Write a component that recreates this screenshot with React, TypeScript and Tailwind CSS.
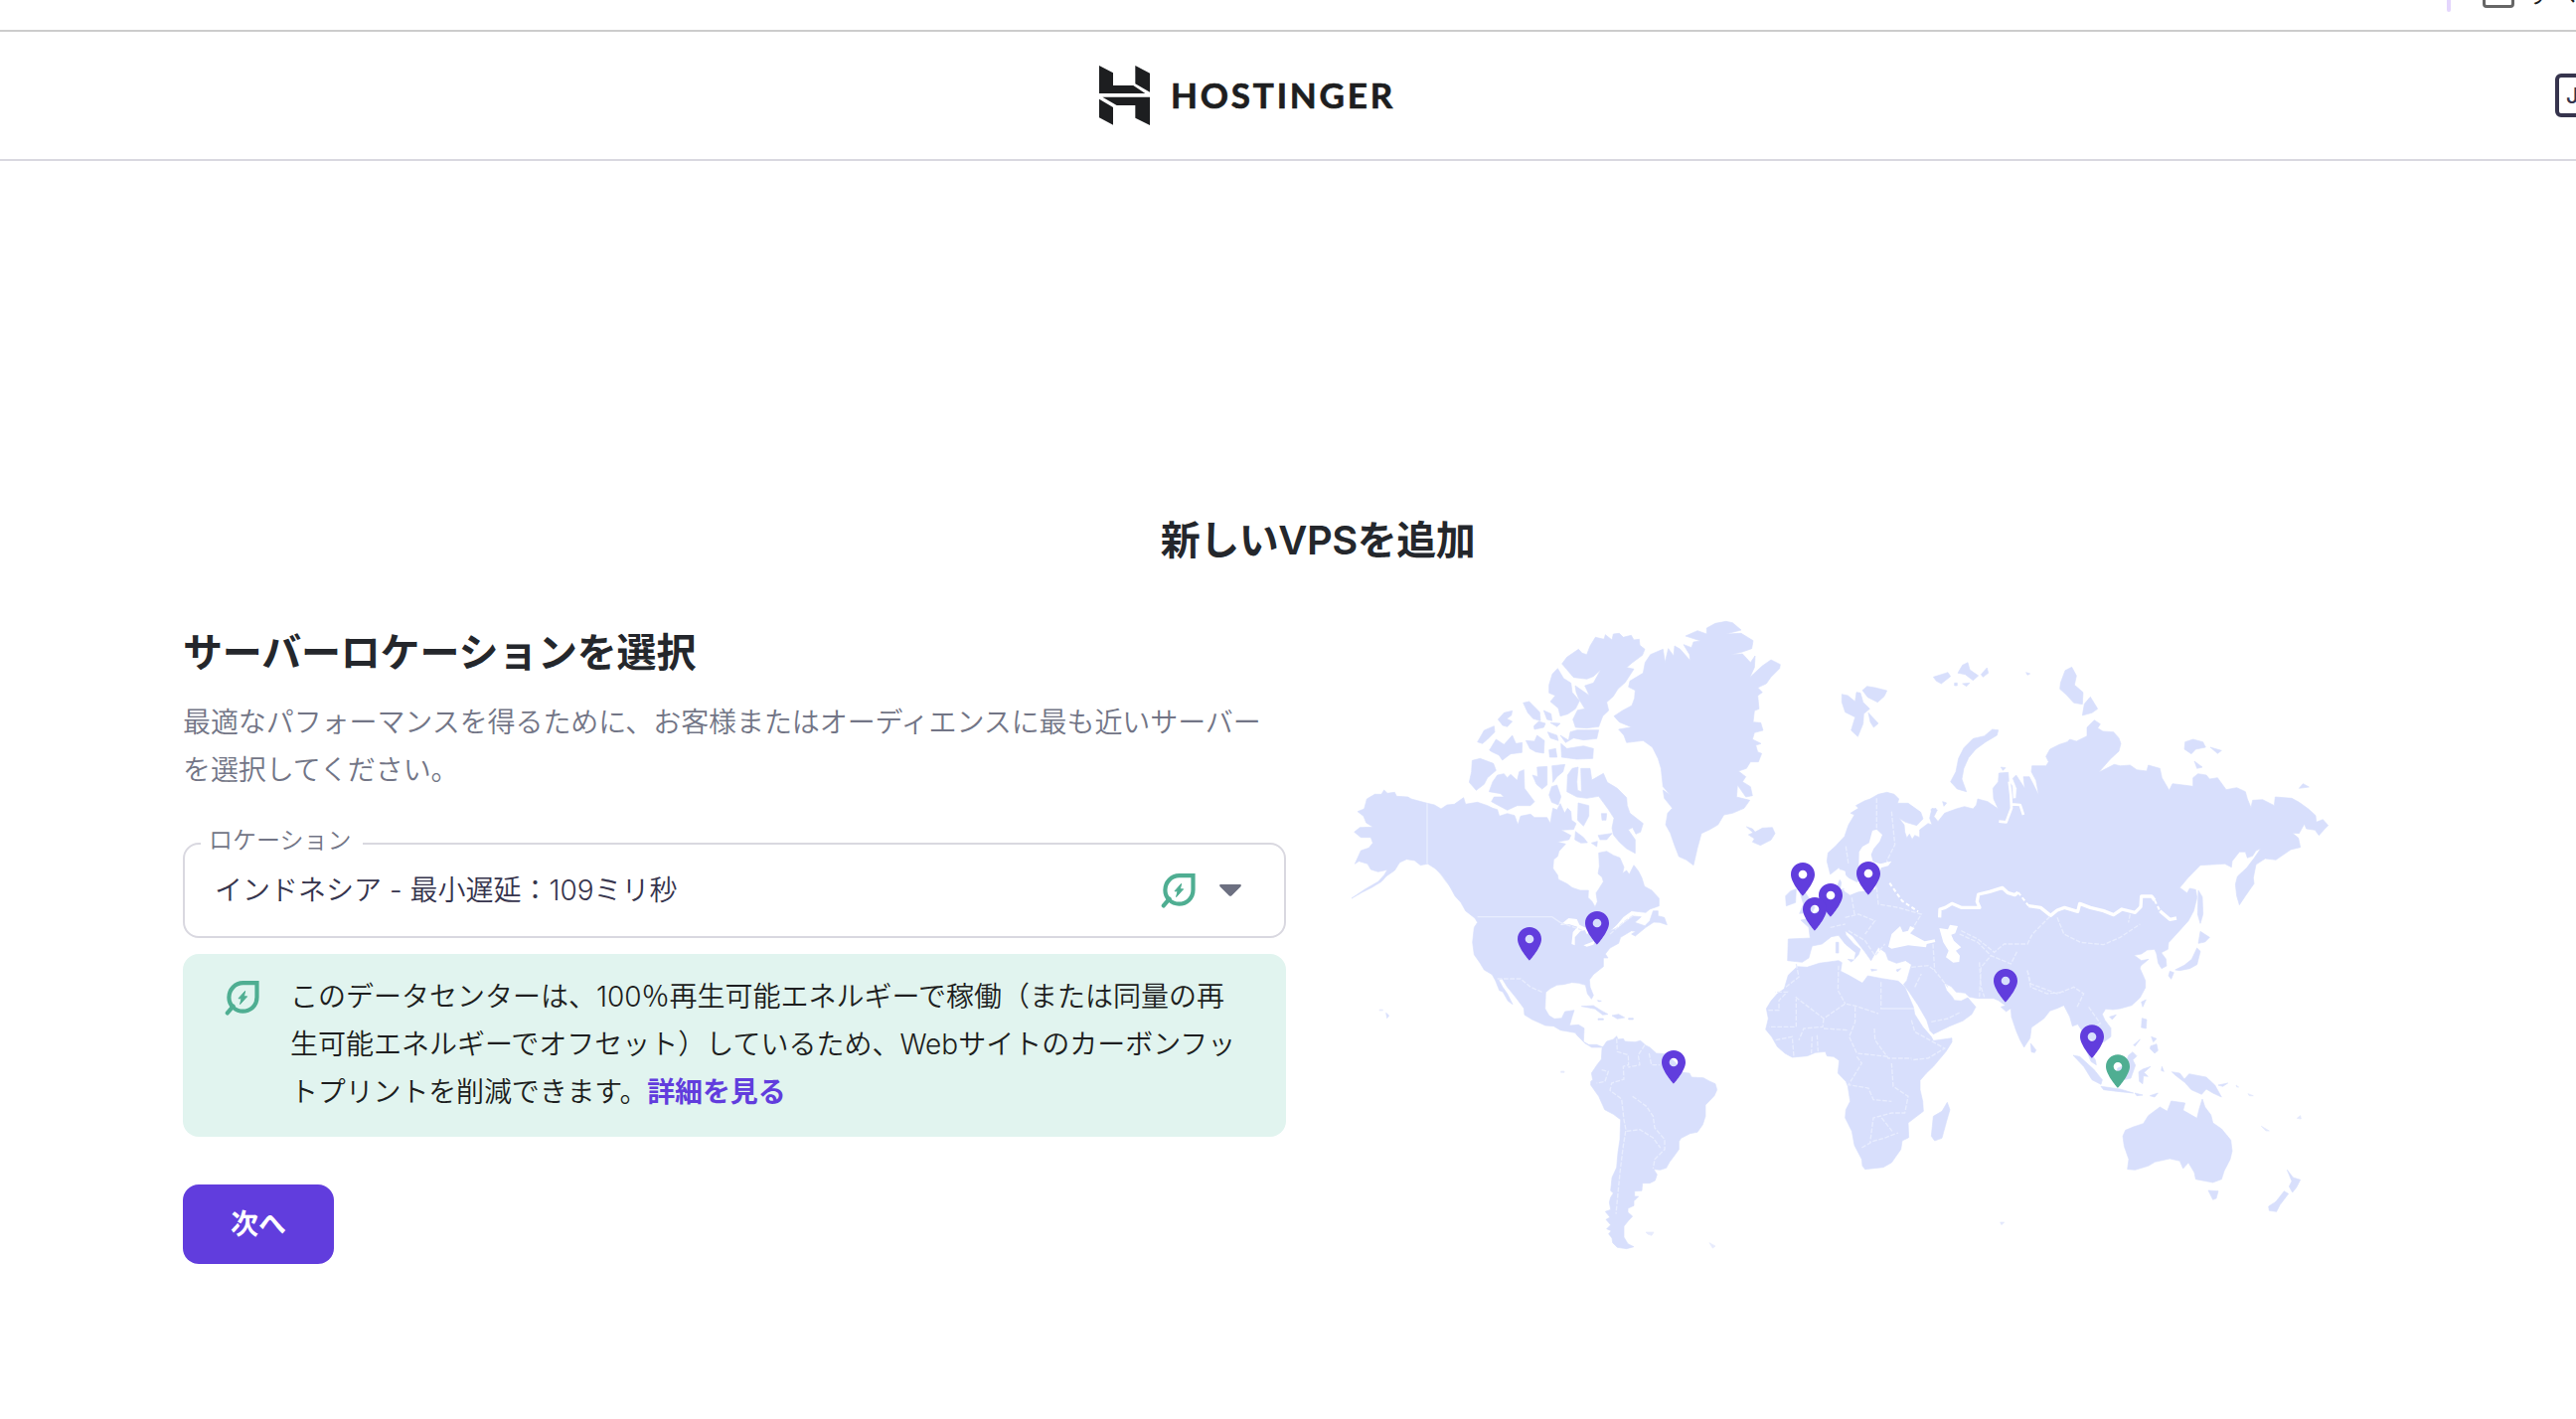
import React from "react";

const LAND = "#d8dffc";
const SEA = "#ffffff";

function Logo() {
  return (
    <svg className="h-[60px] w-[51px]" viewBox="78 78 153 180" fill="#1d1e20">
      <path d="M78 78L120 100V138H181L217 162H78Z" />
      <path d="M187 78L231 101V158L187 133Z" />
      <path d="M88 173H231V258L187 236V198H131Z" />
      <path d="M78 179L120 204V257L78 235Z" />
    </svg>
  );
}

function LeafIcon() {
  return (
    <svg className="h-[36px] w-[36px] shrink-0" viewBox="0 0 36 36" fill="none">
      <path
        d="M32.5 3.2V17.5C32.5 25.8 26.2 31.6 18.3 31.6C10.5 31.6 4.4 25.6 4.4 17.8C4.4 9.9 10.6 3.2 18.5 3.2Z"
        stroke="#4fae92"
        strokeWidth="4.2"
      />
      <path d="M8.6 26.6L2.8 33.4" stroke="#4fae92" strokeWidth="4.2" strokeLinecap="round" />
      <path d="M20.6 11.4L14 18.8H17L15.6 24.6L22.6 16.8H19.4Z" fill="#4fae92" stroke="#4fae92" strokeLinejoin="round" />
    </svg>
  );
}

type PinProps = { x: number; y: number; color?: string };

/** Marker whose tip touches (x, y). */
function Pin({ x, y, color = "#613ddd" }: PinProps) {
  return (
    <path
      transform={`translate(${x - 36} ${y - 101})`}
      fill={color}
      fillRule="evenodd"
      d="M36 0C16 0 0 16 0 36C0 62 36 101 36 101S72 62 72 36C72 16 56 0 36 0ZM36 49a13 13 0 1 1 0-26a13 13 0 0 1 0 26Z"
    />
  );
}

const pins: PinProps[] = [
  { x: 597, y: 1100 },
  { x: 801, y: 1052 },
  { x: 1422, y: 905 },
  { x: 1506, y: 968 },
  { x: 1458, y: 1010 },
  { x: 1620, y: 902 },
  { x: 1032, y: 1472 },
  { x: 2034, y: 1226 },
  { x: 2295, y: 1395 },
  { x: 2373, y: 1485, color: "#4fae92" },
];

function NorthAmerica() {
  return (
    <g>
      {/* mainland */}
      <path d="M78 650L98 642L106 612L130 598L150 598L158 585L168 595L190 592L196 604L230 606L240 612L288 625L310 630L330 642L348 630L370 628L398 608L404 628L440 622L470 632L486 640L500 644L506 664L530 656L552 662L562 690L570 664L600 658L612 668L650 668L660 686L664 660L668 640L680 645L690 626L703 655L712 640L722 650L724 676L738 686L730 704L692 706L722 722L716 735L680 742L706 748L686 770L682 785L670 795L668 822L682 842L684 855L710 868L726 880L750 888L775 888L774 910L786 922L795 938L802 922L798 896L806 884L820 862L816 848L804 838L808 815L806 775L830 770L850 782L870 790L882 818L878 836L890 828L898 840L912 812L926 830L936 850L944 876L966 888L988 912L988 935L960 945L948 955L905 950L880 968L860 992L840 1010L866 1000L890 980L910 966L934 968L915 985L945 995L960 980L970 950L985 950L985 965L1004 970L1012 992L990 985L972 984L948 1000L916 1026L905 1020L918 1012L905 1010L872 1030L866 1048L840 1062L826 1080L834 1092L820 1092L820 1118L790 1142L778 1158L780 1180L790 1205L784 1216L772 1200L766 1174L745 1168L725 1166L700 1172L680 1174L660 1184L646 1196L644 1245L656 1266L672 1276L694 1274L704 1254L732 1250L726 1268L718 1296L745 1294L762 1304L760 1345L776 1354L800 1354L820 1362L806 1362L785 1362L765 1350L740 1325L735 1318L690 1310L670 1298L645 1296L605 1278L582 1264L580 1244L556 1212L530 1180L514 1154L504 1158L516 1180L530 1200L546 1232L532 1222L516 1194L506 1190L494 1160L484 1142L460 1128L448 1108L430 1082L425 1045L430 1000L440 985L432 972L404 950L390 925L372 905L352 868L330 838L312 822L290 808L268 812L250 798L226 794L205 804L190 828L165 845L150 862L120 880L92 894L60 912L100 885L140 862L158 842L168 826L140 832L118 825L108 808L82 800L70 808L88 768L112 760L124 745L118 728L88 728L68 712L85 698L125 697L104 684L96 664Z" />
      {/* alaska panhandle islands */}
      <path d="M320 828L350 850L378 890L366 888L345 862Z" opacity=".6" />
      {/* Banks and Victoria */}
      <path d="M424 496L448 490L488 505L496 526L470 548L460 568L436 586L415 562L422 530Z" />
      <path d="M475 590L486 560L500 540L520 536L530 548L540 538L560 556L566 530L580 524L582 580L612 620L600 632L560 632L530 646L500 630L482 620L490 606L520 606L510 596Z" />
      <path d="M440 440L460 405L490 392L492 410L470 432L455 445Z" />
      <path d="M476 465L496 432L520 448L545 420L556 445L575 442L574 472L540 476L515 495L505 480L484 470Z" />
      <path d="M502 372L520 352L545 346L542 360L528 370L545 378L530 394L516 390Z" />
      <path d="M578 322L596 318L628 350L630 376L608 370L592 352Z" />
      <path d="M586 436L612 438L620 420L642 436L640 474L616 470L598 460Z" />
      <path d="M640 345L662 355L665 376L650 372Z M610 392L625 378L645 384L640 396L612 402Z M660 382L690 384L680 394Z M652 410L680 420L684 436L660 428Z M656 464L676 460L680 486L658 486Z" />
      <path d="M606 540L622 545L620 516L650 514L650 570L635 582L618 568Z" />
      <path d="M665 512L704 508L698 530L680 545L668 562Z M664 575L680 570L692 605L684 630L664 622L656 600Z" />
      {/* Devon */}
      <path d="M690 420L715 435L720 410L740 404L806 404L800 430L760 434L730 428L706 442Z M692 445L710 460L760 452L790 460L788 490L740 492L694 486Z" />
      {/* Axel Heiberg */}
      <path d="M656 268L666 235L682 218L700 248L722 262L726 290L748 316L736 340L712 356L690 362L684 338L660 318L675 300L656 292Z" />
      {/* Ellesmere */}
      <path d="M695 204L710 184L745 160L756 172L770 176L780 150L796 124L822 130L826 116L846 132L850 114L868 112L880 124L904 118L912 132L928 130L930 148L945 160L938 178L908 200L890 215L912 220L886 260L864 280L850 302L830 320L836 345L818 362L806 394L770 398L736 396L728 372L742 344L764 340L746 310L738 290L735 270L778 300L764 270L790 262L812 222L790 242L770 250L730 245Z" />
      {/* Baffin */}
      <path d="M710 590L712 540L726 520L744 516L740 560L742 586L754 590L752 520L780 520L785 555L820 535L832 562L862 580L890 608L892 632L900 655L940 686L932 712L918 718L908 698L895 705L916 735L916 776L890 762L868 742L850 720L846 700L852 670L834 642L806 604L770 610L740 606Z" />
      {/* Southampton and nearby */}
      <path d="M744 624L776 632L776 664L760 694L742 676Z M736 710L760 728L772 744L752 745L734 735Z M814 656L830 656L828 676L816 676Z M804 722L846 716L830 735L810 735Z M784 745L802 740L800 756Z" />
      {/* Greenland */}
      <path d="M852 362L878 345L906 330L914 308L916 284L896 274L900 256L940 232L946 200L962 176L1000 160L1006 200L1016 158L1032 180L1035 150L1052 160L1082 194L1080 176L1062 146L1086 155L1092 138L1114 135L1068 120L1104 104L1132 114L1132 96L1158 82L1190 76L1210 80L1236 102L1190 114L1236 112L1272 134L1268 158L1240 168L1205 176L1240 174L1264 200L1278 180L1276 215L1262 245L1300 210L1326 192L1354 206L1352 218L1325 245L1312 264L1286 276L1300 290L1286 300L1290 340L1276 346L1272 380L1295 382L1302 405L1276 412L1270 432L1296 445L1280 450L1286 470L1298 475L1288 500L1264 500L1252 520L1228 528L1250 545L1240 560L1264 575L1270 602L1250 606L1225 570L1222 606L1262 616L1245 640L1210 655L1184 660L1166 690L1140 705L1116 716L1104 760L1092 812L1070 796L1048 786L1034 750L1022 715L1008 690L1014 655L1028 640L1004 610L1000 585L1022 600L1000 575L994 520L985 490L968 456L940 436L890 442L882 420L866 402L905 395L868 380Z" />
      {/* Iceland */}
      <path d="M1252 696L1270 702L1278 712L1300 700L1330 698L1338 716L1326 736L1294 752L1270 742L1276 732L1258 720L1272 714Z" />
      {/* Caribbean and Hawaii */}
      <path d="M754 1238L790 1236L812 1250L834 1262L818 1264L795 1246Z M846 1266L866 1262L884 1272L862 1276Z M804 1275h16v4h-16Z M896 1274h14v4h-14Z M802 1220l12 2l-8 2Z M164 1258l9 8l-6 8Z" />
      <path opacity=".6" d="M144 1248h10v3h-10Z M692 1434h10v4h-10Z" />
    </g>
  );
}

function SouthAmerica() {
  return (
    <g transform="translate(0 1140)">
      <path d="M816 225L830 204L850 198L860 188L864 198L880 196L885 204L915 206L932 202L948 216L960 222L980 240L1010 242L1040 270L1060 298L1080 300L1086 312L1122 314L1140 324L1158 332L1163 350L1155 368L1142 382L1128 396L1128 430L1120 455L1104 478L1082 482L1055 496L1048 506L1048 530L1035 548L1020 568L1010 586L992 592L972 590L982 606L976 624L960 632L938 632L936 655L914 656L914 672L926 672L912 686L912 700L894 708L894 720L908 732L896 745L882 762L882 795L894 815L912 824L890 830L862 826L848 812L846 798L836 785L844 776L830 770L842 758L828 742L840 735L826 718L842 712L838 690L842 675L850 662L842 655L846 615L860 585L864 540L870 500L872 440L850 424L824 410L806 370L782 336L782 325L788 320L784 300L800 276L814 258Z" />
      <path d="M948 780L972 780L966 790L954 786Z M1140 812L1158 822L1150 828Z" opacity=".6" />
    </g>
  );
}

function Eurasia() {
  return (
    <g transform="translate(1500 0)">
      <path d="M-5 800L-2 775L20 755L48 725L60 690L78 660L66 655L90 640L82 632L108 618L125 612L150 598L176 592L198 598L212 612L208 625L240 625L278 652L285 672L266 692L232 682L212 670L228 690L230 712L236 730L244 718L252 734L260 722L275 728L275 705L300 686L312 690L305 670L312 640L328 645L318 665L330 680L350 655L385 642L410 635L436 642L446 630L450 612L480 620L512 642L498 612L496 580L512 560L514 534L542 532L544 560L554 572L556 612L566 610L568 580L556 550L566 540L592 580L588 545L606 545L634 600L626 556L612 530L614 512L656 512L664 500L656 484L668 462L696 448L720 440L728 432L748 438L780 422L780 396L802 374L820 386L812 398L828 408L860 410L876 428L882 445L876 468L850 492L815 532L862 508L880 512L910 510L930 524L960 528L965 510L1000 520L1006 548L1028 586L1038 566L1070 570L1100 574L1100 548L1115 536L1140 540L1150 552L1174 548L1200 584L1232 578L1258 590L1264 612L1275 638L1280 616L1310 614L1345 632L1348 606L1398 610L1420 622L1448 642L1470 662L1472 682L1492 674L1508 692L1496 704L1480 722L1468 706L1442 702L1436 688L1420 716L1400 715L1418 730L1424 758L1395 765L1350 796L1318 792L1290 810L1282 850L1284 868L1272 885L1258 905L1240 932L1232 905L1228 870L1234 846L1262 820L1285 790L1304 762L1290 768L1280 784L1264 790L1258 772L1240 772L1218 800L1216 818L1196 808L1122 812L1085 850L1060 880L1082 896L1090 882L1108 886L1112 910L1102 950L1086 980L1050 1020L1026 1046L1024 1066L1004 1076L1018 1095L1020 1116L1005 1124L995 1108L990 1080L984 1066L962 1068L944 1080L922 1084L944 1100L966 1096L942 1116L940 1124L956 1160L956 1182L940 1212L915 1235L880 1245L858 1248L836 1246L826 1262L834 1280L852 1304L852 1330L832 1345L810 1350L790 1336L786 1370L805 1400L808 1415L792 1405L778 1370L765 1312L752 1292L736 1298L728 1270L710 1235L690 1244L668 1252L650 1275L612 1302L608 1334L590 1362L578 1340L566 1312L552 1270L550 1244L536 1254L520 1240L534 1236L512 1220L498 1214L450 1214L425 1210L412 1198L385 1195L370 1178L348 1168L356 1190L372 1208L380 1220L400 1222L420 1212L444 1240L432 1262L405 1282L365 1298L316 1322L306 1312L296 1280L270 1235L244 1196L226 1172L236 1160L250 1112L232 1100L205 1108L180 1098L172 1076L150 1060L128 1100L108 1072L72 1026L50 1010L52 1022L76 1050L96 1066L90 1082L78 1096L82 1076L50 1050L30 1024L8 1028L-20 1050L-50 1056L-60 1092L-80 1105L-124 1100L-122 1035L-56 1032L-60 1000L-84 978L-50 970L-40 955L0 940L30 925L24 880L34 855L50 895L110 890L120 880L60 850L30 820L5 840Z" />
      {/* Novaya Zemlya */}
      <path d="M494 402L512 404L508 420L474 440L444 462L422 488L408 520L402 552L416 590L388 582L368 560L384 530L392 490L408 458L436 430L470 422Z" />
      {/* Svalbard */}
      <path d="M40 296L58 300L80 318L84 290L96 292L104 320L124 340L106 355L104 385L88 424L68 405L80 365L50 350L40 320Z M102 284L116 272L140 276L176 285L168 302L148 320L118 305Z M120 352L150 384L136 396L126 380Z" />
      {/* Franz Josef Land */}
      <path d="M316 244L360 230L368 242L340 264L325 256Z M390 232L404 208L420 200L426 222L452 240L436 254L412 236Z M460 236L478 216L482 232L466 244Z M404 264L426 262L416 272Z M380 262h8v8h-8Z M596 230l12 4l-8 4Z" />
      {/* Severnaya Zemlya */}
      <path d="M700 262L714 224L734 214L748 240L742 268L768 290L766 326L740 322L718 298L698 280Z M766 360L772 325L790 304L812 340L795 352Z" />
      {/* New Siberian Islands and Wrangel */}
      <path d="M1076 440L1100 432L1130 440L1138 456L1108 462L1095 476L1074 462Z M1152 456L1186 466L1174 475Z M1104 498L1128 516L1112 520Z M1420 580L1432 566L1450 576Z" />
      <path d="M308 645L324 640L320 655Z M344 620L356 624L348 634Z M520 516L534 518L526 526Z" />
      {/* Sakhalin, Japan */}
      <path d="M1116 888L1128 908L1130 960L1122 988L1114 960Z M1122 1012L1150 1030L1136 1044L1116 1048Z M1112 1062L1122 1072L1112 1112L1090 1124L1060 1130L1046 1128L1074 1114L1096 1096Z M1030 1132L1042 1136L1034 1156L1026 1146Z" />
      {/* British Isles */}
      <path d="M-115 890L-98 884L-100 925L-128 935L-130 905Z M-88 890L-70 895L-42 940L-50 955L-88 958L-76 930Z" />
      {/* Mediterranean islands */}
      <path d="M22 1045h8v32h-8Z M58 1096L76 1098L68 1104Z M128 1126L146 1128L130 1132Z M204 1128L218 1124L208 1134Z" />
      {/* Sri Lanka, Hainan, Taiwan */}
      <path d="M610 1350L626 1370L622 1378L612 1376Z M848 1270L868 1264L856 1278Z M944 1225L958 1218L948 1240Z" />
    </g>
  );
}

function Africa() {
  return (
    <g transform="translate(1260 540)">
      <path d="M145 578L175 580L212 568L270 560L280 566L276 592L300 604L342 628L358 606L400 614L450 622L470 640L496 700L500 722L524 760L550 790L556 802L612 794L612 806L594 835L556 880L535 900L516 922L516 950L524 985L526 1015L480 1050L482 1094L462 1104L458 1130L430 1170L405 1184L350 1190L342 1180L340 1160L318 1118L310 1075L290 1035L292 1010L305 985L298 940L292 925L268 900L272 862L255 850L235 848L230 835L200 838L175 848L130 852L108 840L85 820L68 790L50 768L58 735L52 705L66 682L85 660L106 645L118 604Z" />
      <path d="M598 988L606 1010L596 1045L582 1096L560 1104L550 1090L556 1030L582 1015Z" />
    </g>
  );
}

function Oceania() {
  return (
    <g transform="translate(1500 900)">
      <path d="M888 730L896 712L920 702L950 692L965 668L1000 642L1022 655L1034 624L1076 630L1070 652L1112 676L1118 650L1128 618L1136 642L1154 666L1160 690L1186 708L1214 742L1218 775L1212 800L1194 835L1186 860L1160 870L1108 860L1104 840L1086 810L1070 828L1060 805L1030 798L985 808L965 820L925 832L902 830L906 800L892 760Z" />
      <path d="M1146 894L1176 896L1170 918L1160 922Z" />
      <path d="M1384 832L1402 855L1424 862L1412 885L1400 900L1390 882L1398 866Z M1375 896L1388 904L1362 938L1352 958L1330 955L1328 942L1350 928Z" />
      {/* Sumatra, Java, Borneo */}
      <path d="M738 486L758 490L800 528L826 560L822 574L795 560L770 520Z M822 580L880 588L920 600L880 596L830 590Z M905 486L918 476L930 488L918 500L926 516L912 555L890 560L870 550L872 525L895 515Z" />
      <path d="M936 536L948 528L972 520L952 538L964 550L950 548L948 572L938 565Z M1006 520L1012 535L1004 532Z M970 608L994 600L984 612Z M924 600L948 606L930 608Z" />
      {/* New Guinea */}
      <path d="M1036 536L1060 540L1074 558L1088 542L1140 552L1166 576L1186 612L1160 600L1140 588L1126 604L1095 590L1075 568L1045 545Z M1176 576L1205 570L1190 580Z" />
      {/* Philippines */}
      <path d="M946 374L960 378L958 405L944 402Z M972 458L990 452L994 472L984 480L970 466Z M974 430L990 436L980 446Z M920 455L940 438L925 458Z" />
      <path d="M1306 700L1330 714L1320 714Z M1414 676L1424 668L1426 678Z M1266 602L1282 608L1270 608Z M1230 576l8 6h-6Z M518 990L530 990L522 998Z" opacity=".7" />
    </g>
  );
}

function InlandWater() {
  return (
    <g fill={SEA}>
      {/* Great Lakes */}
      <path d="M690 992L715 972L740 975L748 992L764 1000L790 1010L770 1020L764 1008L750 1012L734 1030L734 1054L724 1050L728 1014L742 998L716 990Z M760 1054L795 1040L790 1052L770 1058Z" />
      <g transform="translate(1260 540)">
        {/* Baltic */}
        <path d="M372 168L385 164L402 180L394 200L376 222L368 240L374 262L396 268L430 260L420 274L398 280L394 300L380 345L330 352L304 362L282 345L302 348L330 320L332 232L342 216L362 205Z" />
        <path d="M244 300L268 296L278 286L290 290L296 340L276 345L280 318L262 312L250 330Z" />
        {/* Black Sea */}
        <path d="M420 518L430 480L456 456L464 474L480 470L486 456L500 462L486 478L530 502L560 496L562 504L536 510L534 520L480 514L430 524Z" />
        {/* Caspian */}
        <path d="M574 462L600 466L606 452L630 456L622 478L610 482L618 500L640 520L624 530L636 545L634 564L616 566L594 550L602 530L586 505Z" />
      </g>
      <g transform="translate(1500 0)" fill="none" stroke={SEA} strokeLinejoin="round">
        <path strokeWidth="8" d="M545 560L550 600L552 640L536 682L514 680M552 628L578 630L588 660" />
        <path
          strokeWidth="10"
          d="M335 970L336 945L352 940L372 928L400 940L456 940L448 922L452 900L486 892L524 880L540 895L562 902L572 894M604 935L640 940L670 964L690 948L712 940L752 952L758 928L790 940L830 950L860 962L885 945L925 955L942 938L944 906L975 906L984 918M1000 950L1030 976L1050 972"
        />
        <path strokeWidth="6" d="M572 894L604 935M984 918L1000 950M150 815L186 802M184 866L222 920L270 952" strokeDasharray="12 8" />
      </g>
    </g>
  );
}

function Borders() {
  return (
    <g fill="none" stroke="#e8edfe" strokeWidth="4">
      <path d="M288 625V808M440 968H665L690 985" />
      <g strokeDasharray="14 5">
        <path d="M500 1155L570 1155L600 1180L635 1195M690 985L760 1010M840 1020L880 985L915 960" />
        <g transform="translate(0 1140)">
          <path d="M860 196L862 235L895 245L896 275L880 280L882 318L845 330L840 352L875 378L882 440L888 470L880 520L870 600L858 725M945 215L925 245L930 275L895 282M958 240L965 275L990 275M908 370L950 400L970 430L975 465L1005 500L1005 530L975 560L970 588M890 475L930 470L970 495L992 525M815 290L835 295L825 325L800 330" />
        </g>
        <g transform="translate(1260 540)">
          <path d="M58 710H90V680L115 655H78M142 570L150 610L110 640M140 670L225 735L290 690L325 698L390 720M142 670V760H60M270 575L268 650L290 690M398 625V705H495M400 705H498M320 700V745L302 790L325 840L420 850M225 735L222 760L165 765L150 800M225 765L300 770M378 765L380 800L420 855L490 855M490 740L500 775L545 800L590 825L540 855L490 860M325 850L340 870L300 935L360 945L375 980L430 985M430 870L435 940L480 970L470 1020L430 1020L375 1035L365 1110M400 1035L432 1075M340 1125L375 1105L410 1095L450 1080M80 800L130 790L135 850M190 790L188 840M205 785L208 835" />
          <path d="M385 70V160M430 110L440 210L415 260M292 215L300 270M290 430L330 420L380 440L350 480M310 370L318 420M385 340L390 390L450 400L520 420L495 460M245 460L290 450M300 470L350 500L380 545L410 510M555 510L560 590L600 640M490 580L540 575L560 590M500 640L520 600M550 745L600 735L640 715M695 670L700 580L730 545M635 480L690 505L730 545L790 570L810 530M840 590L850 640L900 660L950 655" />
        </g>
        <g transform="translate(1500 0)">
          <path d="M400 1010L450 1035L500 1075L530 1050L600 1050L615 1020L670 965M690 970L710 1020L760 1045L830 1052L880 1030L940 990M600 1130L610 1170L690 1200L740 1180L770 1200L750 1240M455 1105L460 1180L470 1210M785 1240L820 1290L800 1300M910 960L905 985" />
        </g>
      </g>
    </g>
  );
}

function WorldMap() {
  return (
    <svg className="h-[680px] w-[1020px] shrink-0" viewBox="0 0 3060 2040">
      <g fill={LAND} stroke={LAND} strokeWidth="2" strokeLinejoin="round">
        <NorthAmerica />
        <SouthAmerica />
        <Eurasia />
        <Africa />
        <Oceania />
      </g>
      <InlandWater />
      <Borders />
      {pins.map((pin) => (
        <Pin key={`${pin.x}-${pin.y}`} {...pin} />
      ))}
    </svg>
  );
}

function TopStrip() {
  return (
    <div className="relative flex h-8 justify-end overflow-hidden border-b-2 border-[#cccccc]">
      <div className="mr-8 h-3 w-1 shrink-0 rounded-b-full bg-[#e4d6fd]" />
      <div className="-mt-6 mr-[12px] h-8 w-8 shrink-0 rounded border-[3px] border-[#666666]" />
      <div className="-mt-[22px] w-[50px] shrink-0 whitespace-nowrap text-[26px] leading-8 text-[#1d1e20]">すべ</div>
    </div>
  );
}

function Header() {
  return (
    <header className="relative flex h-[130px] items-center border-b-2 border-[#d9d8e0]">
      <div className="ml-[1106px] flex items-center gap-[21px]">
        <Logo />
        <span className="-mt-[2px] font-[Lato] text-[35px] font-bold leading-none tracking-[2.8px] text-[#1d1e20] [-webkit-text-stroke:0.7px_#1d1e20]">
          HOSTINGER
        </span>
      </div>
      <div className="absolute left-[2571px] top-[42px] flex h-11 w-14 items-center rounded-md border-4 border-[#36344d] pl-[7px] text-[22px] font-medium text-[#36344d]">
        JA
      </div>
    </header>
  );
}

export default function App() {
  return (
    <div
      lang="ja"
      className="h-[1428px] w-[2592px] overflow-hidden bg-white font-['Inter','Noto_Sans_CJK_JP',sans-serif] text-[28px] font-[350] leading-[48px]"
    >
      <TopStrip />
      <Header />
      <main className="pt-[354px]">
        <h1 className="h-[84px] w-[2652px] text-center text-[40px] font-bold leading-[56px] tracking-[-0.5px] text-[#24272c]">
          新しい<span className="font-semibold">VPS</span>を追加
        </h1>
        <div className="flex items-start pl-[184px]">
          <section className="mr-[46px] w-[1110px] shrink-0 pt-[29px]">
            <h2 className="text-[40px] font-bold leading-[56px] tracking-[-0.2px] text-[#24272c]">
              サーバーロケーションを選択
            </h2>
            <p className="mt-[18px] whitespace-nowrap tracking-[-0.08px] text-[#727586]">
              最適なパフォーマンスを得るために、お客様またはオーディエンスに最も近いサーバー
              <br />
              を選択してください。
            </p>
            <div className="relative mt-[49px] flex h-24 items-center rounded-2xl border-2 border-[#d9d8e0] pl-[30px] pr-[43px]">
              <span className="absolute -top-[20px] left-4 bg-white pl-2 pr-[11px] text-[24px] leading-8 text-[#727586]">
                ロケーション
              </span>
              <span className="grow text-[#36344d]">インドネシア - 最小遅延：109ミリ秒</span>
              <LeafIcon />
              <svg className="ml-[23px] h-3 w-[22px]" viewBox="0 0 22 12" fill="#6d7081">
                <path d="M1.5 0H20.5C22 0 22.3 1.300 21.400 2.200L12.400 11.200C11.600 12 10.400 12 9.600 11.200L.6 2.200C-.3 1.300 0 0 1.500 0Z" />
              </svg>
            </div>
            <div className="mt-4 flex h-[184px] rounded-2xl bg-[#e1f4ef] pl-[42px] pt-[19px]">
              <div className="mr-[30px] pt-[7px]">
                <LeafIcon />
              </div>
              <p className="whitespace-nowrap text-[#1d1e20]">
                このデータセンターは、100％再生可能エネルギーで稼働（または同量の再
                <br />
                生可能エネルギーでオフセット）しているため、Webサイトのカーボンフッ
                <br />
                <span className="tracking-[-0.15px]">
                  トプリントを削減できます。
                  <a className="font-bold text-[#613ddd]">詳細を見る</a>
                </span>
              </p>
            </div>
            <button className="mt-12 flex h-20 w-[152px] items-center justify-center rounded-2xl bg-[#613ddd] font-bold text-white">
              次へ
            </button>
          </section>
          <WorldMap />
        </div>
      </main>
    </div>
  );
}
